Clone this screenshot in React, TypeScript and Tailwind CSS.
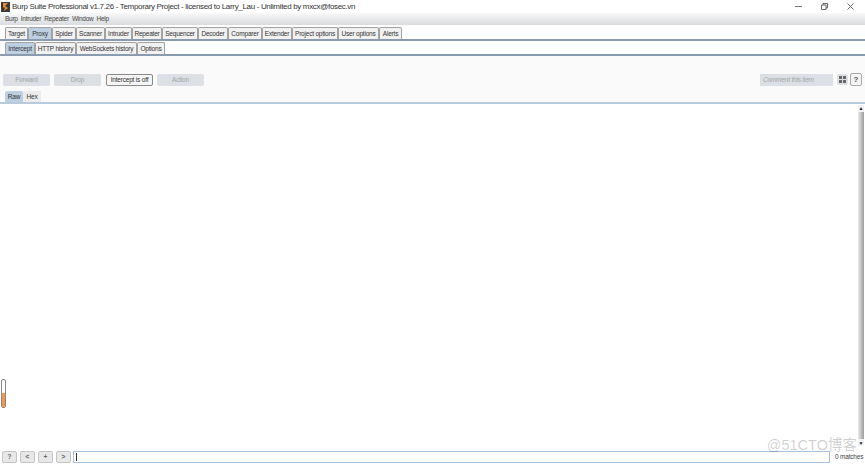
import React from 'react';

const sans = 'font-["Liberation_Sans",Arial,sans-serif]';

const mainTabs = ['Target', 'Proxy', 'Spider', 'Scanner', 'Intruder', 'Repeater', 'Sequencer', 'Decoder', 'Comparer', 'Extender', 'Project options', 'User options', 'Alerts'];
const mainWidths = [23, 24, 24, 29, 27, 30, 36, 30, 34, 30, 46, 41, 23];
const subTabs = ['Intercept', 'HTTP history', 'WebSockets history', 'Options'];
const subWidths = [30, 41, 61, 28];

const Tab = ({ label, active, w }: { label: string; active: boolean; w: number }) => (
  <div
    style={{ width: w }}
    className={`h-[12px] flex items-center justify-center border border-b-0 border-[#a2a2a2] rounded-t-[2px] text-[6.5px] tracking-[-0.2px] text-[#333] whitespace-nowrap ${active ? 'bg-[#bcd0e2]' : 'bg-[#f1f1f1]'}`}
  >
    {label}
  </div>
);

const ActionButton = ({ label, on }: { label: string; on?: boolean }) => (
  <div
    className={`w-[47px] h-[12px] flex items-center justify-center rounded-[2px] text-[6.5px] tracking-[-0.2px] ${on ? 'ml-px border border-[#8a8a8a] bg-[#f5f5f5] text-[#333]' : 'bg-[#dcdfe3] text-[#a2a5a9]'}`}
  >
    {label}
  </div>
);

const SmallButton = ({ label }: { label: string }) => (
  <div className="w-[15px] h-[12px] flex items-center justify-center rounded-[2px] border border-[#c4c4c4] bg-[#e8e8e8] text-[6.5px] font-bold text-[#666]">
    {label}
  </div>
);

export default function App() {
  return (
    <div className={`${sans} relative w-[865px] h-[464px] overflow-hidden bg-white flex flex-col`}>
      {/* title bar */}
      <div className="h-[13px] flex items-center pl-[1px] bg-white">
        <svg width="9" height="10" viewBox="0 0 9 10" className="mr-[2px]">
          <rect width="9" height="10" fill="#3a3a3a" />
          <path d="M2 1h5L4 4l3 2-4 3 1-3-2-1z" fill="#f08a35" />
        </svg>
        <span className="text-[8px] tracking-[-0.33px] text-[#333] whitespace-nowrap">Burp Suite Professional v1.7.26 - Temporary Project - licensed to Larry_Lau - Unlimited by mxcx@fosec.vn</span>
        <div className="ml-auto flex items-center gap-[19px] pr-[11px]">
          <svg width="7" height="7" viewBox="0 0 7 7"><path d="M0 3.5h7" stroke="#777" /></svg>
          <svg width="7" height="7" viewBox="0 0 7 7" fill="none"><path d="M.5 2h4.500v4.500h-4.500zM2 2V.5h4.500V5H5" stroke="#666" /></svg>
          <svg width="7" height="7" viewBox="0 0 7 7"><path d="M.5.5l6 6M6.500.5l-6 6" stroke="#666" /></svg>
        </div>
      </div>

      {/* menu bar */}
      <div className="h-[12px] flex items-center gap-[3px] pl-[5px] text-[6.5px] tracking-[-0.25px] text-[#444] bg-gradient-to-b from-[#f8f8f8] to-[#d9dcdf]">
        {['Burp', 'Intruder', 'Repeater', 'Window', 'Help'].map((m) => (
          <span key={m}>{m}</span>
        ))}
      </div>

      {/* main tabs */}
      <div className="h-[16px] flex items-end pl-[5px] border-b-[2px] border-[#8a9bb0] bg-white">
        {mainTabs.map((t, i) => (
          <Tab key={t} label={t} w={mainWidths[i]} active={t === 'Proxy'} />
        ))}
      </div>

      {/* sub tabs */}
      <div className="h-[15px] flex items-end pl-[5px] border-b-[2px] border-[#8a9bb0] bg-white">
        {subTabs.map((t, i) => (
          <Tab key={t} label={t} w={subWidths[i]} active={t === 'Intercept'} />
        ))}
      </div>

      {/* action row */}
      <div className="h-[33px] flex items-center justify-between pl-[3px] pr-[3px] pt-[14px] bg-[#fafafa]">
        <div className="flex gap-[4px]">
          <ActionButton label="Forward" />
          <ActionButton label="Drop" />
          <ActionButton label="Intercept is off" on />
          <ActionButton label="Action" />
        </div>
        <div className="flex items-center">
          <div className="w-[73px] h-[12px] mr-[4px] flex items-center pl-[3px] bg-[#dcdfe3] text-[6.5px] tracking-[-0.2px] italic text-[#a2a5a9]">Comment this item</div>
          <div className="w-[11px] h-[11px] mr-[2px] grid grid-cols-2 gap-[1px] p-[2px] bg-[#dcdfe3] rounded-[2px]">
            <span className="bg-[#666]" />
            <span className="bg-[#666]" />
            <span className="bg-[#666]" />
            <span className="bg-[#666]" />
          </div>
          <div className="w-[12px] h-[13px] flex items-center justify-center border border-[#aaa] rounded-[2px] bg-[#f4f4f4] text-[8px] font-bold text-[#555]">?</div>
        </div>
      </div>

      {/* raw / hex */}
      <div className="h-[15px] flex items-end pl-[5px] border-b-[2px] border-[#b8cbdc] bg-[#fafafa] text-[6.5px] tracking-[-0.2px] text-[#333]">
        <div className="w-[18px] h-[11px] flex items-center justify-center rounded-t-[2px] bg-[#bcd0e2]">Raw</div>
        <div className="w-[18px] h-[11px] flex items-center justify-center bg-[#ececec]">Hex</div>
      </div>

      {/* editor */}
      <div className="flex-1 flex bg-white">
        <div className="flex-1" />
        <div className="w-[6px] mr-[1px] mt-[1px] flex flex-col bg-[#f2f2f2] text-[5px] leading-[6px] text-center text-[#222]">
          <span>▲</span>
          <div className="flex-1 my-[1px] bg-gradient-to-r from-[#ececec] to-[#9c9c9c]" />
          <span>▼</span>
        </div>
      </div>

      {/* search row */}
      <div className="h-[18px] flex items-center pl-[2px] pt-[3px] bg-white">
        <div className="flex gap-[3px] mr-[2px]">
          <SmallButton label="?" />
          <SmallButton label="<" />
          <SmallButton label="+" />
          <SmallButton label=">" />
        </div>
        <div className="w-[757px] h-[12px] flex items-center pl-[2px] border border-[#a6c2dc]">
          <span className="w-px h-[8px] bg-[#333]" />
        </div>
        <span className="ml-[5px] text-[6.5px] tracking-[-0.2px] leading-[6px] text-[#444] whitespace-nowrap">0 matches</span>
      </div>

      {/* memory gauge, sits over the editor */}
      <div className="absolute left-[1px] top-[379px] w-[5px] h-[29px] rounded-[2px] border border-[#888] bg-white flex flex-col justify-end overflow-hidden">
        <div className="h-[14px] bg-[#f59648]" />
      </div>

      {/* watermark */}
      <div className={`absolute right-[8px] top-[439px] text-[14.5px] leading-[13px] text-[#000]/20 whitespace-nowrap font-["Liberation_Sans","Noto_Sans_CJK_SC",sans-serif]`}>@51CTO博客</div>
    </div>
  );
}
